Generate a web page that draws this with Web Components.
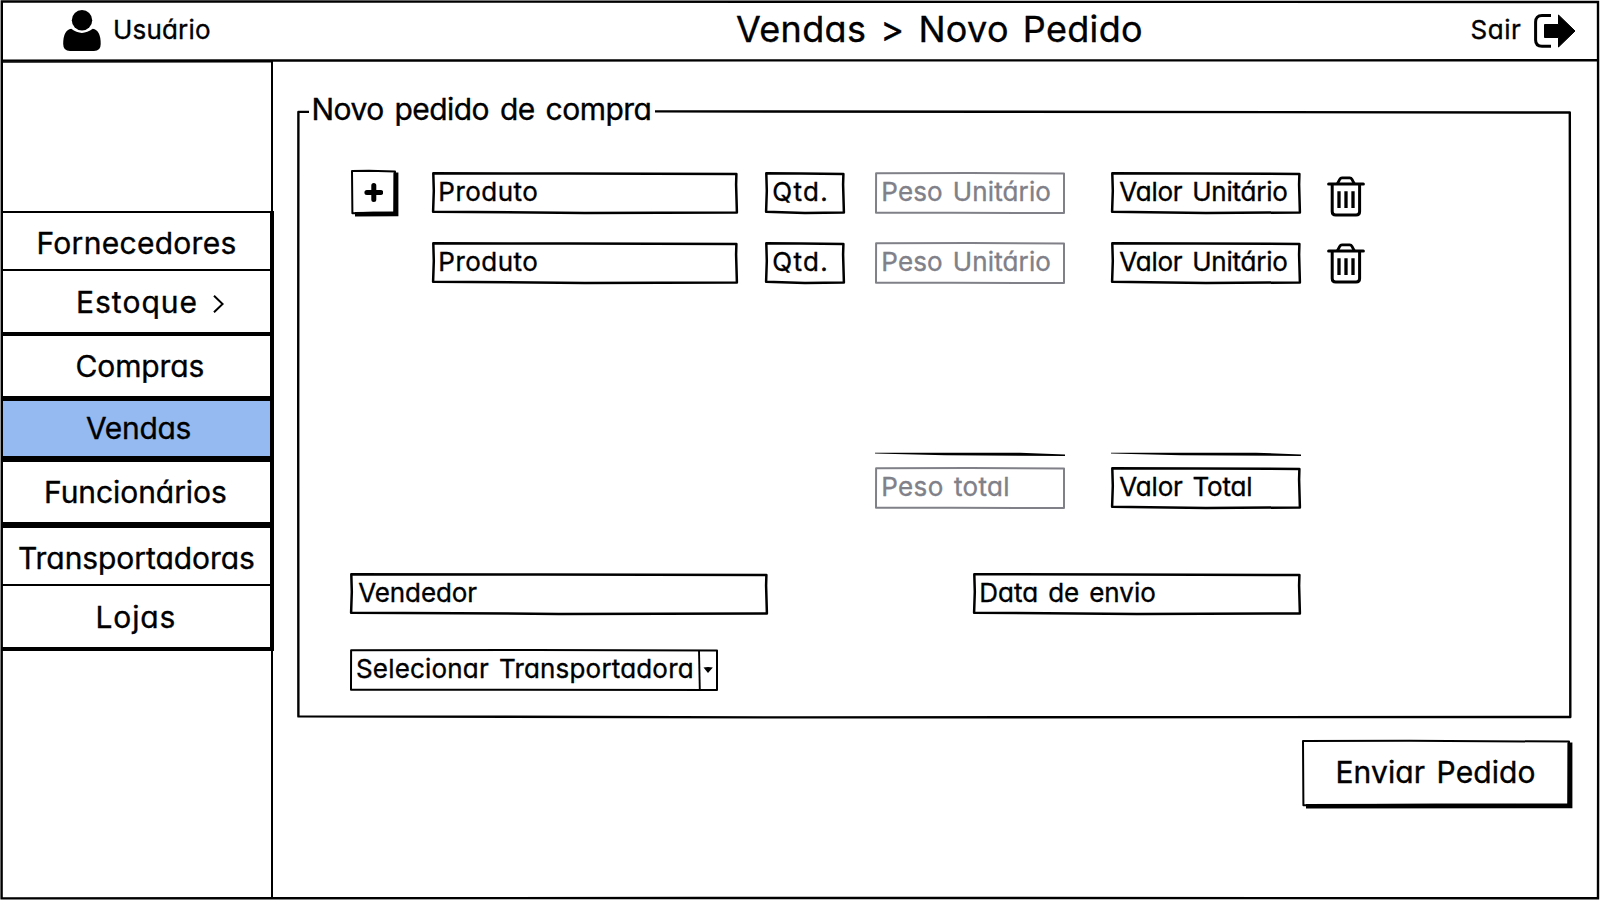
<!DOCTYPE html>
<html lang="pt-BR">
<head>
<meta charset="utf-8">
<title>Vendas &gt; Novo Pedido</title>
<style>
html,body{margin:0;height:100%;background:#fff;color:#000;font-family:Inter,"Open Sans",sans-serif;overflow:hidden}
</style>
</head>
<body>
<order-page></order-page>
<script>
const define = (name, html, setup) => customElements.define(name, class extends HTMLElement {
  connectedCallback() {
    if (this.shadowRoot) return;
    this.attachShadow({ mode: 'open' }).innerHTML = html;
    if (setup) setup.call(this, this.shadowRoot);
  }
});

/* Text whose letter spacing is set so that the ink spans the given width. */
const pen = document.createElement('canvas').getContext('2d');
define('sk-label', `<style>
:host{display:block;flex:none;white-space:nowrap;line-height:1.2;font-feature-settings:"cv11";-webkit-text-stroke:.35px currentColor}
span{display:inline-block}
</style><span></span>`, function (root) {
  const text = this.getAttribute('text'), size = +this.getAttribute('size'), w = +this.getAttribute('w');
  const span = root.querySelector('span');
  this.style.fontSize = size + 'px';
  this.style.width = w + 'px';
  span.textContent = text;
  span.style.wordSpacing = size * 0.1 + 'px';
  pen.font = size + 'px Inter, "Open Sans", sans-serif';
  const m = pen.measureText(text);
  const left = -m.actualBoundingBoxLeft, right = m.width - m.actualBoundingBoxRight;
  const ink = span.getBoundingClientRect().width - left - right;
  span.style.letterSpacing = (w - ink) / (text.length - 1) + 'px';
  span.style.marginLeft = -left + 'px';
});

/* Hand-drawn rectangle outline around slotted content. */
define('sk-frame', `<style>
:host{display:flex;position:relative;box-sizing:border-box;flex:none}
svg{position:absolute;inset:0;width:100%;height:100%;overflow:visible;pointer-events:none}
</style><svg fill="none" stroke="currentColor" stroke-linejoin="round"><path/></svg><slot></slot>`, function (root) {
  const w = this.offsetWidth, h = this.offsetHeight, p = root.querySelector('path');
  const bold = !this.hasAttribute('thin');
  p.setAttribute('stroke-width', bold ? 2.5 : 2);
  p.setAttribute('d', bold
    ? `M1.3 1.3L${w*.45} 1.5L${w-1.6} 2L${w-1.9} ${h*.3}L${w-1.1} ${h-1.5}L${w*.5} ${h-1.1}L1.1 ${h-2.3}L1.8 ${h*.45}Z`
    : `M1.1 1.2L${w*.5} 1L${w-1} 1.4L${w-1} ${h-1}L${w*.4} ${h-1.2}L1 ${h-1.3}Z`);
});

const field = (text, box, w, off) => `<sk-frame class="field${off ? ' off' : ''}" ${off ? 'thin' : ''} style="width:${box}px"><sk-label text="${text}" size="26" w="${w}"></sk-label></sk-frame>`;

define('sk-trash', `<style>:host{display:block;width:38px;height:41px;flex:none}svg{display:block}</style>
<svg width="38" height="41" viewBox="0 0 38 41" fill="none" stroke="#000"><path stroke-width="3" stroke-linecap="round" d="M1.6 8H36.4"/><path stroke-width="2.8" stroke-linejoin="round" d="M10.3 8L12.7 3.3Q13.5 1.8 15 1.8H22.7Q24.2 1.8 25 3.3L27.4 8"/><path stroke-width="3" d="M5.2 8V35.5Q5.2 39 8.7 39H29.1Q32.6 39 32.6 35.5V8"/><path stroke-width="3.3" d="M12 15.3V32M19 15.3V32M26 15.3V32"/></svg>`);

define('sk-button', `<style>
:host{display:block;flex:none;box-sizing:border-box}
.face{position:relative;box-sizing:border-box;width:100%;height:100%;background:#fff;display:flex;justify-content:center;align-items:center}
svg{position:absolute;inset:0;width:100%;height:100%;overflow:visible}
slot{position:relative}
</style><div class="face"><svg></svg><slot></slot></div>`, function (root) {
  const w = this.offsetWidth, h = this.offsetHeight;
  root.querySelector('svg').innerHTML =
    `<path d="M4 ${h-2}L${w-2.5} ${h-2.6}L${w-2.6} 2.5L${w+2.4} 2.6V${h+2.3}L4 ${h+2.6}Z"/><path fill="none" stroke="#000" stroke-width="2" stroke-linejoin="round" d="M1 1L${w*.4} .8L${w-1} 1.6L${w-1.6} ${h-1}L${w*.5} ${h-1.2}L1.4 ${h-.8}Z"/>`;
});

define('app-header', `<style>
:host{display:flex;box-sizing:border-box;height:61px;position:relative;padding-top:10px}
.user{margin-left:63px;flex:none}
.name{margin:4px 0 0 14px}
.title{margin:-2px 0 0 526px}
.exit{margin:4px 0 0 330.5px}
.out{margin:4px 0 0 12.5px;flex:none}
</style>
<svg class="user" width="38" height="41" viewBox="0 0 38 41"><circle cx="19" cy="10.3" r="10.2"/><path d="M8.2 18.8Q18.8 27 29.8 18.8Q37.7 20 37.7 34Q37.7 41 31 41H7Q.2 41 .2 34Q.2 20 8.2 18.8Z"/></svg>
<sk-label class="name" text="Usuário" size="26" w="95"></sk-label>
<sk-label class="title" text="Vendas &gt; Novo Pedido" size="36" w="405"></sk-label>
<sk-label class="exit" text="Sair" size="26" w="49.5"></sk-label>
<svg class="out" width="42" height="34" viewBox="0 0 42 34"><path fill="none" stroke="#000" stroke-width="3" d="M17 1.6H8Q1.6 1.6 1.6 8V26Q1.6 32.3 8 32.3H17"/><path stroke="#000" stroke-linejoin="round" d="M10.5 10.5H24.5V1L41 17L24.5 33V23.5H10.5Z"/></svg>`);

/* Each item: label, ink left edge, ink width, top rule, inner height, text offset. */
const items = [
  ['Fornecedores', 38.5, 197, 2.5, 55.5, 11.7],
  ['Estoque', 78, 118.5, 2.5, 60, 12.7],
  ['Compras', 76.5, 127, 4, 60, 12.2],
  ['Vendas', 86, 104.5, 5, 55, 9.7],
  ['Funcionários', 46, 180, 6, 60, 12.7],
  ['Transportadoras', 19, 235, 6, 56.5, 12.2],
  ['Lojas', 97.5, 77, 2.5, 60, 13.2]
];
define('side-menu', `<style>
:host{display:block;box-sizing:border-box;width:273px;border-right:2px solid #000;padding:150.2px 0 0 2px;height:837px}
.list{width:271.5px;box-sizing:border-box;border-right:4px solid #000;border-bottom:4px solid #000}
.item{display:flex;box-sizing:content-box;border-top:solid #000}
.item.on{background:#94baf1}
.chev{margin:23.5px 0 0 16.5px;flex:none}
</style><div class="list">${items.map(([t, x, w, b, h, p]) => `<div class="item${t === 'Vendas' ? ' on' : ''}" style="border-top-width:${b}px;height:${h + b - Math.floor(b)}px"><sk-label text="${t}" size="30" w="${w}" style="margin:${p}px 0 0 ${x - 2}px"></sk-label>${t === 'Estoque' ? '<svg class="chev" width="11" height="18" viewBox="0 0 11 18" fill="none" stroke="#000" stroke-width="2"><path d="M1 .8L9.6 9L1 17.2"/></svg>' : ''}</div>`).join('')}</div>`);

define('order-form', `<style>
:host{display:block;box-sizing:border-box;width:1274px;height:607px;position:relative;padding-left:53px}
.edge{position:absolute;inset:0;overflow:visible}
.legend{margin:-19px 0 0 -36.5px}
.row{display:flex;height:70px}
.first{margin-top:44.5px}
.field{height:42px;padding:4.2px 0 0 8.3px}
.off{color:#808089}
.cols{display:grid;grid-template-columns:82px 333px 110px 236px 216px 38px;align-items:start}
.add{width:45px;height:44px;margin:-1.2px 0 0 1.2px}
.rules{margin-top:141px;height:14px}
.rules svg{display:block;overflow:visible}
.send{display:flex;justify-content:space-between;width:951px;margin-top:64px}
.pick{margin-top:34px;width:368px;height:42px;padding:4.2px 0 0 7px}
.drop{position:relative;margin:-3.2px 0 0 6px;width:20px;height:40px;flex:none}
</style>
<svg class="edge" width="1274" height="607" fill="none" stroke="#000" stroke-width="2.4" stroke-linejoin="round"><path d="M12 1.9H1.4L1.2 300L1.4 606.4L500 607.4L1273.3 607V300L1272.8 2.5L700 1.7L358 1.4"/></svg>
<sk-label class="legend" text="Novo pedido de compra" size="30" w="336.5"></sk-label>
<div class="cols row first"><sk-button class="add"><svg width="19" height="19" viewBox="0 0 19 19" stroke="#000" stroke-width="5" stroke-linecap="round"><path d="M9.8 2.6V16.4M2.9 9.5H16.7"/></svg></sk-button>${field('Produto', 306, 97)}${field('Qtd.', 80, 53)}${field('Peso Unitário', 190, 167, 1)}${field('Valor Unitário', 190, 168)}<sk-trash style="margin-top:4px"></sk-trash></div>
<div class="cols row"><i></i>${field('Produto', 306, 97)}${field('Qtd.', 80, 53)}${field('Peso Unitário', 190, 167, 1)}${field('Valor Unitário', 190, 168)}<sk-trash style="margin-top:1px"></sk-trash></div>
<div class="cols rules"><i></i><i></i><i></i><svg width="190" height="4"><path d="M0 -.3L145 -.2L190 1.4V3L70 2.2L0 .6Z"/></svg><svg width="190" height="4"><path d="M0 -.3L145 -.2L190 1.4V3L70 2.2L0 .6Z"/></svg></div>
<div class="cols"><i></i><i></i><i></i>${field('Peso total', 190, 125, 1)}${field('Valor Total', 190, 132)}</div>
<div class="send">${field('Vendedor', 418, 119)}${field('Data de envio', 328, 174)}</div>
<sk-frame class="pick" thin><sk-label text="Selecionar Transportadora" size="26" w="335"></sk-label><svg class="drop" width="20" height="40"><path fill="none" stroke="#000" stroke-width="1.9" d="M1 0L1.8 40"/><path d="M5.5 17.5Q10 16.5 14.8 17.5L10 23Z"/></svg></sk-frame>`);

define('order-page', `<style>
:host{display:block;position:relative;width:1600px;height:900px;background:#fff}
.body{display:flex;height:839px}
main{display:flex;flex-direction:column;margin:49px 0 0 24px}
.submit{width:268px;height:66px;margin:22.5px 0 0 1005px}
.submit sk-label{margin-top:-1px}
.edge{position:absolute;inset:0;pointer-events:none}
</style>
<app-header></app-header>
<div class="body"><side-menu></side-menu><main><order-form></order-form><sk-button class="submit"><sk-label text="Enviar Pedido" size="30" w="197"></sk-label></sk-button></main></div>
<svg class="edge" width="1600" height="900" fill="none" stroke="#000" stroke-width="2.4"><path d="M1.8 1.4L800 1.8L1598 2L1598.5 450L1598 898.2L700 898L1.6 898.4L1.8 450Z"/><path d="M1 60.6L800 60.4L1599 60.3"/><path stroke-width="1.6" d="M1 62L272 61.8"/></svg>`);
</script>
</body>
</html>
